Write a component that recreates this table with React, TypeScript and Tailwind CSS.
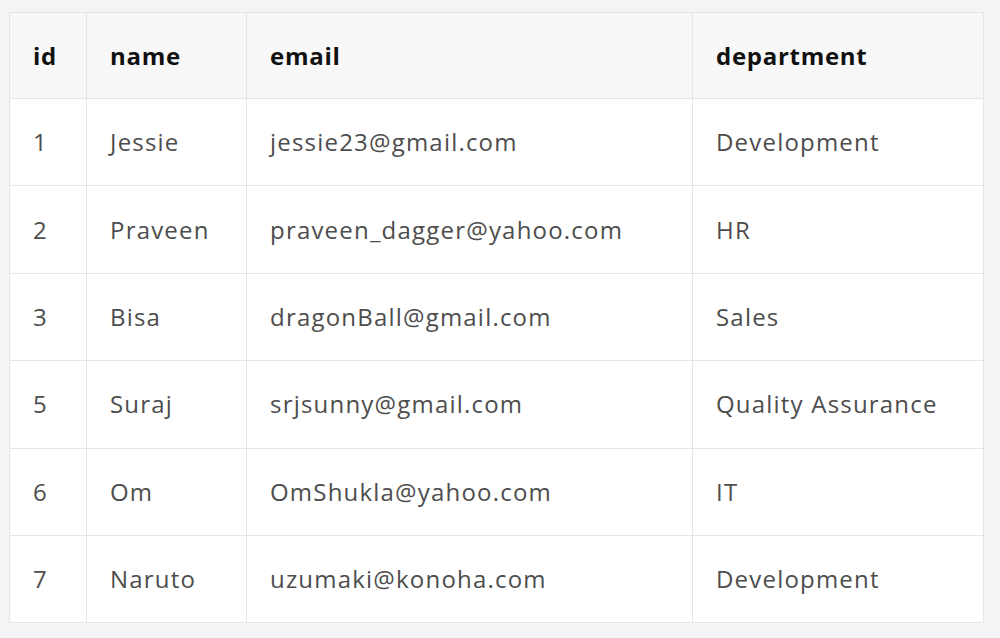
const rows = [
  { id: 1, name: 'Jessie', email: 'jessie23@gmail.com', department: 'Development' },
  { id: 2, name: 'Praveen', email: 'praveen_dagger@yahoo.com', department: 'HR' },
  { id: 3, name: 'Bisa', email: 'dragonBall@gmail.com', department: 'Sales' },
  { id: 5, name: 'Suraj', email: 'srjsunny@gmail.com', department: 'Quality Assurance' },
  { id: 6, name: 'Om', email: 'OmShukla@yahoo.com', department: 'IT' },
  { id: 7, name: 'Naruto', email: 'uzumaki@konoha.com', department: 'Development' },
];

const cell = 'border border-[#e6e6e6] pl-[23px] pr-4 align-middle text-[24px] tracking-[0.05em] text-[#4d4d4d]';

export default function App() {
  return (
    <div className="min-h-[638px] w-full bg-[#f3f4f6] pt-[12px] pl-[9px] font-['Open_Sans',sans-serif]">
      <table className="w-[974px] table-fixed border-collapse bg-white">
        <colgroup>
          <col className="w-[77px]" />
          <col className="w-[160px]" />
          <col className="w-[446px]" />
          <col className="w-[291px]" />
        </colgroup>
        <thead>
          <tr className="h-[86px] bg-[#f8f8f8]">
            {['id', 'name', 'email', 'department'].map((h) => (
              <th
                key={h}
                className="border border-[#e6e6e6] pl-[23px] pr-4 text-left align-middle text-[24px] font-bold tracking-[0.03em] text-[#111]"
              >
                {h}
              </th>
            ))}
          </tr>
        </thead>
        <tbody>
          {rows.map((r) => (
            <tr key={r.id} className="h-[87.4px]">
              <td className={cell}>{r.id}</td>
              <td className={cell}>{r.name}</td>
              <td className={cell}>{r.email}</td>
              <td className={cell}>{r.department}</td>
            </tr>
          ))}
        </tbody>
      </table>
    </div>
  );
}
